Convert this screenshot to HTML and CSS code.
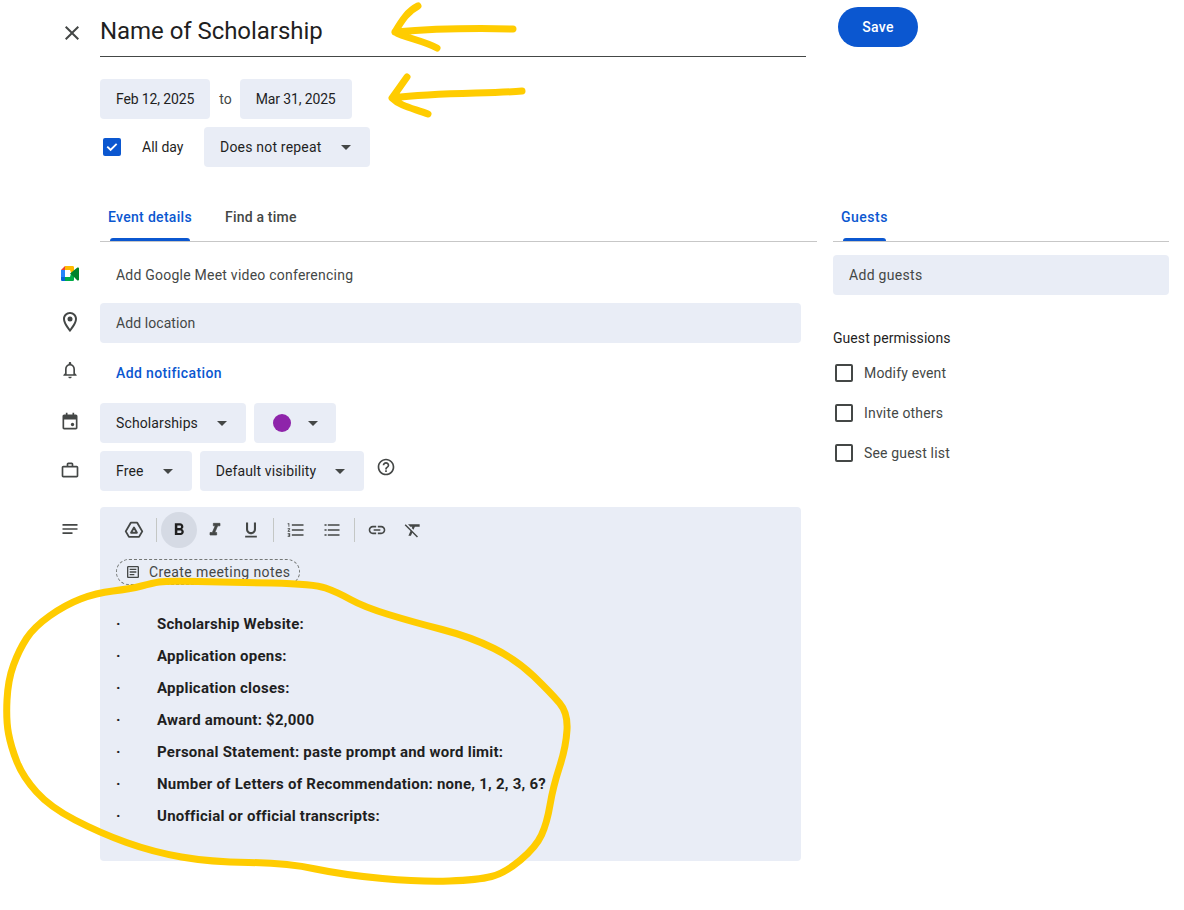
FILE: index.html
```html
<!DOCTYPE html>
<html lang="en">
<head>
<meta charset="utf-8">
<title>Name of Scholarship</title>
<link rel="stylesheet" href="styles.css">
</head>
<body>
<div class="page">
  <header class="top-left">
    <div class="head-row">
      <div class="gutter gutter-close"><svg class="ico24 close" viewBox="0 0 24 24"><path d="M19 6.41L17.59 5 12 10.59 6.41 5 5 6.41 10.59 12 5 17.59 6.41 19 12 13.41 17.59 19 19 17.59 13.41 12z"/></svg></div>
      <div class="title">Name of Scholarship</div>
    </div>
    <div class="when">
      <span class="chip chip-date">Feb 12, 2025</span>
      <span class="to">to</span>
      <span class="chip chip-date">Mar 31, 2025</span>
    </div>
    <div class="repeat">
      <span class="check-on"><svg viewBox="0 0 18 18"><path d="M3.6 9.2l1.3-1.3 2.7 2.7 5.4-5.4 1.3 1.3-6.7 6.7z"/></svg></span>
      <span class="allday">All day</span>
      <span class="chip chip-drop ls-wide">Does not repeat<svg class="caret" viewBox="0 0 24 24"><path d="M7 10l5 5 5-5z"/></svg></span>
    </div>
  </header>
  <div class="top-right"><button class="save">Save</button></div>

  <nav class="tabs tabs-main">
    <span class="tab tab-active">Event details</span>
    <span class="tab tab-find">Find a time</span>
  </nav>
  <nav class="tabs">
    <span class="tab tab-active tab-guests">Guests</span>
  </nav>

  <main class="details">
    <div class="row row-meet">
      <div class="gutter"><svg class="meet" viewBox="0 0 18 15">
        <path fill="#ea4335" d="M4 0L0 4h4z"/>
        <path fill="#2684fc" d="M0 4h4v7H0z"/>
        <path fill="#0066da" d="M0 11h4v4H1.3C.6 15 0 14.4 0 13.7z"/>
        <path fill="#ffba00" d="M4 0h7.7C12.4 0 13 .6 13 1.3V5l-2.5 2.5L9 4H4z"/>
        <path fill="#00ac47" d="M4 15h7.7c.7 0 1.3-.6 1.3-1.3V10L10 7.5 9 11H4z"/>
        <path fill="#00832d" d="M9 7.5l4-3.2 3.4-2.7c.7-.5 1.6 0 1.6.8v11.2c0 .8-.9 1.3-1.6.8L13 11z"/>
      </svg></div>
      <span class="plain">Add Google Meet video conferencing</span>
    </div>
    <div class="row row-loc">
      <div class="gutter"><svg class="ico24 up1" viewBox="0 0 24 24"><path d="M12 2C8.13 2 5 5.13 5 9c0 5.25 7 13 7 13s7-7.75 7-13c0-3.87-3.13-7-7-7zM7 9c0-2.76 2.24-5 5-5s5 2.24 5 5c0 2.88-2.88 7.19-5 9.88C9.92 16.21 7 11.85 7 9z"/><circle cx="12" cy="9" r="2.5"/></svg></div>
      <div class="field field-loc">Add location</div>
    </div>
    <div class="row row-note">
      <div class="gutter"><svg class="ico20 up3" viewBox="0 0 24 24"><path d="M18 16v-5c0-3.07-1.64-5.64-4.5-6.32V4c0-.83-.67-1.5-1.5-1.5s-1.5.67-1.5 1.5v.68C7.63 5.36 6 7.92 6 11v5l-2 2v1h16v-1l-2-2zm-2 1H8v-6c0-2.48 1.51-4.5 4-4.5s4 2.02 4 4.5v6zM12 22c1.1 0 2-.9 2-2h-4c0 1.1.9 2 2 2z"/></svg></div>
      <span class="link">Add notification</span>
    </div>
    <div class="row row-cal">
      <div class="gutter"><svg class="ico20 up1" viewBox="0 0 24 24"><path d="M17 3V1h-2v2H9V1H7v2H5C3.9 3 3 3.9 3 5v14c0 1.1.9 2 2 2h14c1.1 0 2-.9 2-2V5c0-1.100-.9-2-2-2h-2zm2 16H5V9h14v10z"/><rect x="13" y="13" width="4" height="4" rx="2"/></svg></div>
      <div class="chips">
        <span class="chip chip-drop ls-slight">Scholarships<svg class="caret" viewBox="0 0 24 24"><path d="M7 10l5 5 5-5z"/></svg></span>
        <span class="chip chip-color"><i class="dot"></i><svg class="caret" viewBox="0 0 24 24"><path d="M7 10l5 5 5-5z"/></svg></span>
      </div>
    </div>
    <div class="row row-free">
      <div class="gutter"><svg class="ico20 up1" viewBox="0 0 24 24"><path d="M20 7h-4V5c0-1.100-.9-2-2-2h-4C8.900 3 8 3.900 8 5v2H4C2.900 7 2 7.900 2 9v10c0 1.100.9 2 2 2h16c1.100 0 2-.9 2-2V9c0-1.100-.9-2-2-2zM10 5h4v2h-4V5zm10 14H4V9h16v10z"/></svg></div>
      <div class="chips">
        <span class="chip chip-drop ls-free">Free<svg class="caret" viewBox="0 0 24 24"><path d="M7 10l5 5 5-5z"/></svg></span>
        <span class="chip chip-drop ls-slight">Default visibility<svg class="caret" viewBox="0 0 24 24"><path d="M7 10l5 5 5-5z"/></svg></span>
      </div>
      <svg class="ico20 help" viewBox="0 0 24 24"><path d="M11 18h2v-2h-2v2zm1-16C6.480 2 2 6.480 2 12s4.480 10 10 10 10-4.480 10-10S17.520 2 12 2zm0 18c-4.410 0-8-3.590-8-8s3.590-8 8-8 8 3.590 8 8-3.590 8-8 8zm0-14c-2.210 0-4 1.790-4 4h2c0-1.100.9-2 2-2s2 .9 2 2c0 2-3 1.750-3 5h2c0-2.250 3-2.500 3-5 0-2.210-1.790-4-4-4z"/></svg>
    </div>
    <div class="row row-desc">
      <div class="gutter gutter-top"><svg class="ico20" viewBox="0 0 24 24"><path d="M3 6h18v2H3zM3 11h18v2H3zM3 16h12v2H3z"/></svg></div>
      <section class="desc">
        <div class="toolbar">
          <span class="tool"><svg class="ico22 drive" viewBox="0 0 24 24"><path d="M8.500 4H15.500L21 13.500 17.500 19.500H6.500L3 13.500Z"/><path d="M12 9.200L15.200 15H8.800Z"/></svg></span>
          <i class="sep"></i>
          <span class="tool tool-on"><svg class="ico20" viewBox="0 0 24 24"><path d="M15.600 10.790c.97-.67 1.650-1.770 1.650-2.790 0-2.260-1.750-4-4-4H7v14h7.040c2.090 0 3.710-1.700 3.710-3.790 0-1.520-.86-2.820-2.150-3.420zM10 6.500h3c.83 0 1.500.67 1.500 1.500s-.67 1.500-1.500 1.500h-3v-3zm3.500 9H10v-3h3.500c.83 0 1.500.67 1.500 1.500s-.67 1.500-1.500 1.500z"/></svg></span>
          <span class="tool"><svg class="ico20 heavy" viewBox="0 0 24 24"><path d="M10 4v3h2.210l-3.420 8H6v3h8v-3h-2.210l3.420-8H18V4z"/></svg></span>
          <span class="tool"><svg class="ico20" viewBox="0 0 24 24"><path d="M12 17c3.310 0 6-2.690 6-6V3h-2.500v8c0 1.930-1.570 3.500-3.500 3.500S8.500 12.930 8.500 11V3H6v8c0 3.310 2.690 6 6 6zm-7 2v2h14v-2H5z"/></svg></span>
          <i class="sep"></i>
          <span class="tool"><svg class="ico20" viewBox="0 0 24 24"><path d="M2 17h2v.5H3v1h1v.5H2v1h3v-4H2v1zm1-9h1V4H2v1h1v3zm-1 3h1.800L2 13.100v.9h3v-1H3.200L5 10.900V10H2v1zm5-6v2h14V5H7zm0 14h14v-2H7v2zm0-6h14v-2H7v2z"/></svg></span>
          <span class="tool"><svg class="ico20" viewBox="0 0 24 24"><path d="M3 5h2.500v2H3zM3 11h2.500v2H3zM3 17h2.500v2H3zM7 5h14v2H7zM7 11h14v2H7zM7 17h14v2H7z"/></svg></span>
          <i class="sep"></i>
          <span class="tool"><svg class="ico20" viewBox="0 0 24 24"><path d="M3.900 12c0-1.710 1.390-3.100 3.100-3.100h4V7H7c-2.760 0-5 2.240-5 5s2.240 5 5 5h4v-1.900H7c-1.710 0-3.100-1.390-3.100-3.100zM8 13h8v-2H8v2zm9-6h-4v1.900h4c1.710 0 3.100 1.390 3.100 3.100s-1.390 3.100-3.100 3.100h-4V17h4c2.760 0 5-2.240 5-5s-2.240-5-5-5z"/></svg></span>
          <span class="tool"><svg class="ico20" viewBox="0 0 24 24"><path d="M3.270 5L2 6.270l6.970 6.970L6.500 19h3l1.570-3.660L16.730 21 18 19.730 3.550 5.270 3.270 5zM6 5v.18L8.820 8h2.400l-.72 1.680 2.100 2.100L14.210 8H20V5H6z"/></svg></span>
        </div>
        <div class="notes"><svg class="ico16" viewBox="0 0 24 24"><path d="M19 5v14H5V5h14m0-2H5c-1.100 0-2 .9-2 2v14c0 1.100.9 2 2 2h14c1.100 0 2-.9 2-2V5c0-1.100-.9-2-2-2zM14 17H7v-2h7v2zm3-4H7v-2h10v2zm0-4H7V7h10v2z"/></svg>Create meeting notes</div>
        <ul class="items">
          <li><span class="mark">·</span>Scholarship Website:</li>
          <li><span class="mark">·</span>Application opens:</li>
          <li><span class="mark">·</span>Application closes:</li>
          <li><span class="mark">·</span>Award amount: $2,000</li>
          <li><span class="mark">·</span>Personal Statement: paste prompt and word limit:</li>
          <li><span class="mark">·</span>Number of Letters of Recommendation: none, 1, 2, 3, 6?</li>
          <li><span class="mark">·</span>Unofficial or official transcripts:</li>
        </ul>
      </section>
    </div>
  </main>

  <aside class="guests">
    <div class="field field-guests">Add guests</div>
    <div class="perm-title">Guest permissions</div>
    <div class="perm"><i class="check-off"></i>Modify event</div>
    <div class="perm"><i class="check-off"></i>Invite others</div>
    <div class="perm"><i class="check-off"></i>See guest list</div>
  </aside>
</div>

<svg class="scribble" viewBox="0 0 1184 910">
  <path d="M513 29C470 28 430 29 395 32M418 6C408 11 402 20 395 32C405 38 422 40 437 48"/>
  <path d="M522 91C490 94 440 92 393 98M407 77C402 84 398 90 392 98C400 106 412 108 428 114"/>
  <path d="M141.500 586Q130 589 113 591Q96 593 80.500 599Q65 605 49.500 616Q34 627 26.500 638.500Q19 650 13.500 665Q8 680 7 700Q6 720 8.500 733.500Q11 747 17 762Q23 777 36.500 792Q50 807 75 820Q100 833 126.500 842.500Q153 852 181.500 857Q210 862 248.500 862.500Q287 863 315.500 869Q344 875 382.500 878.500Q421 882 449.500 881Q478 880 491.500 876.500Q505 873 520.500 860Q536 847 541.500 835Q547 823 550 805Q553 787 559.500 767Q566 747 567 730Q568 713 559.500 703Q551 693 534 676.500Q517 660 494 648.500Q471 637 442 629.500Q413 622 388.500 614.500Q364 607 350.500 599.500Q337 592 325.500 588Q314 584 272 583Q230 582 197.500 581.500Q165 581 159 582Q153 583 141.500 586Z"/>
</svg>
</body>
</html>
```

FILE: styles.css
```css
* { box-sizing: border-box; }
html, body { margin: 0; padding: 0; background: #fff; }
body {
  position: relative;
  width: 1184px;
  height: 910px;
  overflow: hidden;
  font: 14px/20px Roboto, "Liberation Sans", sans-serif;
  color: #1f1f1f;
}
svg { display: block; fill: currentColor; flex: none; }
.page {
  display: grid;
  grid-template-columns: 817px 336px;
  grid-template-rows: 193px 49px auto;
  column-gap: 16px;
}
.gutter { width: 100px; flex: none; display: flex; justify-content: center; padding-left: 40px; color: #444746; }
.gutter-close { padding-left: 44px; }
.gutter-top { align-self: flex-start; padding-top: 12px; }
.ico24 { width: 24px; height: 24px; }
.ico22 { width: 22px; height: 22px; }
.ico20 { width: 20px; height: 20px; }
.ico16 { width: 16px; height: 16px; }
.up1 { margin-top: -2px; }
.up3 { margin-top: -7px; }
.heavy { stroke: currentColor; stroke-width: .8; }

.head-row { display: flex; padding-right: 11px; }
.head-row .gutter { align-items: center; padding-top: 9px; }
.title {
  flex: 1;
  height: 57px;
  padding-top: 15px;
  border-bottom: 1px solid #444746;
  font-size: 24px;
  line-height: 32px;
  letter-spacing: -.05px;
  color: #1f1f1f;
}
.when { display: flex; align-items: center; margin: 22px 0 0 100px; }
.to { margin: 0 8px 0 9px; color: #444746; }
.repeat { display: flex; align-items: center; margin: 8px 0 0 103px; }
.check-on { width: 18px; height: 18px; border-radius: 2px; background: #0b57d0; }
.check-on svg { fill: #fff; }
.allday { margin: 0 20px 0 21px; width: 42px; }
.chip {
  display: inline-flex;
  align-items: center;
  height: 40px;
  padding: 0 16px;
  border-radius: 4px;
  background: #e9edf6;
  white-space: nowrap;
}
.chip-date { letter-spacing: -.13px; }
.ls-wide { letter-spacing: .2px; }
.ls-slight { letter-spacing: .12px; }
.ls-free { letter-spacing: .15px; }
.chip-drop { padding-right: 12px; }
.caret { width: 24px; height: 24px; margin-left: 12px; color: #444746; }
.chip-color { padding: 0 11px 0 19px; }
.chip-color .caret { margin-left: 10px; }
.dot { width: 18px; height: 18px; border-radius: 50%; background: #8e24aa; }

.top-right { padding: 7px 0 0 5px; }
.save {
  display: block;
  width: 80px;
  height: 40px;
  border: 0;
  border-radius: 20px;
  background: #0b57d0;
  color: #fff;
  font: 500 14px/20px Roboto, "Liberation Sans", sans-serif;
  letter-spacing: .25px;
  padding: 0;
}

.tabs { display: flex; border-bottom: 1px solid #c7c7c7; height: 49px; }
.tabs-main { margin-left: 100px; }
.tab { position: relative; height: 49px; padding: 0 8px; line-height: 48px; font-weight: 500; letter-spacing: .2px; color: #444746; }
.tab-active { color: #0b57d0; letter-spacing: .31px; }
.tab-guests { letter-spacing: .5px; }
.tab-active::after {
  content: "";
  position: absolute;
  left: 10px;
  right: 10px;
  bottom: 1px;
  height: 3px;
  border-radius: 3px 3px 0 0;
  background: #0b57d0;
}
.tab-find { margin-left: 17px; }

.details { padding: 13px 16px 0 0; }
.row { display: flex; align-items: center; min-height: 40px; }
.row-loc { margin-top: 8px; }
.row-note { margin-top: 10px; }
.row-cal { margin-top: 10px; }
.row-free { margin-top: 8px; }
.row-desc { margin-top: 16px; align-items: flex-start; }
.meet { width: 18px; height: 15px; margin-top: -3px; }
.plain { margin-left: 16px; color: #444746; letter-spacing: .23px; }
.link { margin-left: 16px; color: #0b57d0; font-weight: 500; letter-spacing: .38px; }
.field {
  flex: 1;
  height: 40px;
  padding: 0 16px;
  border-radius: 4px;
  background: #e9edf6;
  line-height: 40px;
  color: #444746;
}
.field-loc { letter-spacing: .08px; }
.field-guests { letter-spacing: .3px; }
.chips { display: flex; gap: 8px; }
.help { margin: -8px 0 0 12px; color: #444746; }

.desc {
  flex: 1;
  height: 354px;
  padding: 5px 16px 0;
  border-radius: 4px;
  background: #e9edf6;
}
.toolbar { display: flex; align-items: center; height: 36px; color: #444746; }
.tool { width: 36px; height: 36px; display: flex; align-items: center; justify-content: center; border-radius: 50%; }
.tool-on { background: #d5dae4; color: #1f1f1f; }
.sep { width: 1px; height: 24px; margin: 0 4px; background: #c4c7c5; }
.drive { fill: none; stroke: currentColor; stroke-width: 2; stroke-linejoin: round; }
.notes {
  display: flex;
  align-items: center;
  gap: 8px;
  width: 184px;
  height: 26px;
  margin-top: 11px;
  padding-left: 8px;
  border: 1px dashed #747775;
  border-radius: 13px;
  color: #444746;
  letter-spacing: .4px;
  white-space: nowrap;
}
.items { list-style: none; margin: 23px 0 0; padding: 0; font-size: 15px; font-weight: 700; letter-spacing: .24px; }
.items li { display: flex; height: 32px; line-height: 32px; color: #1f1f1f; white-space: nowrap; }
.mark { width: 41px; flex: none; }

.guests { padding-top: 13px; }
.guests .field { display: block; }
.perm-title { margin-top: 33px; letter-spacing: .06px; }
.perm { display: flex; align-items: center; height: 40px; color: #444746; letter-spacing: .17px; }
.perm-title + .perm { margin-top: 5px; }
.check-off { width: 18px; height: 18px; margin: 0 11px 0 2px; border: 2px solid #444746; border-radius: 2px; }

.scribble {
  position: absolute;
  left: 0;
  top: 0;
  width: 1184px;
  height: 910px;
  pointer-events: none;
  fill: none;
  stroke: #ffcc00;
  stroke-width: 7;
  stroke-linecap: round;
  stroke-linejoin: round;
}
```
